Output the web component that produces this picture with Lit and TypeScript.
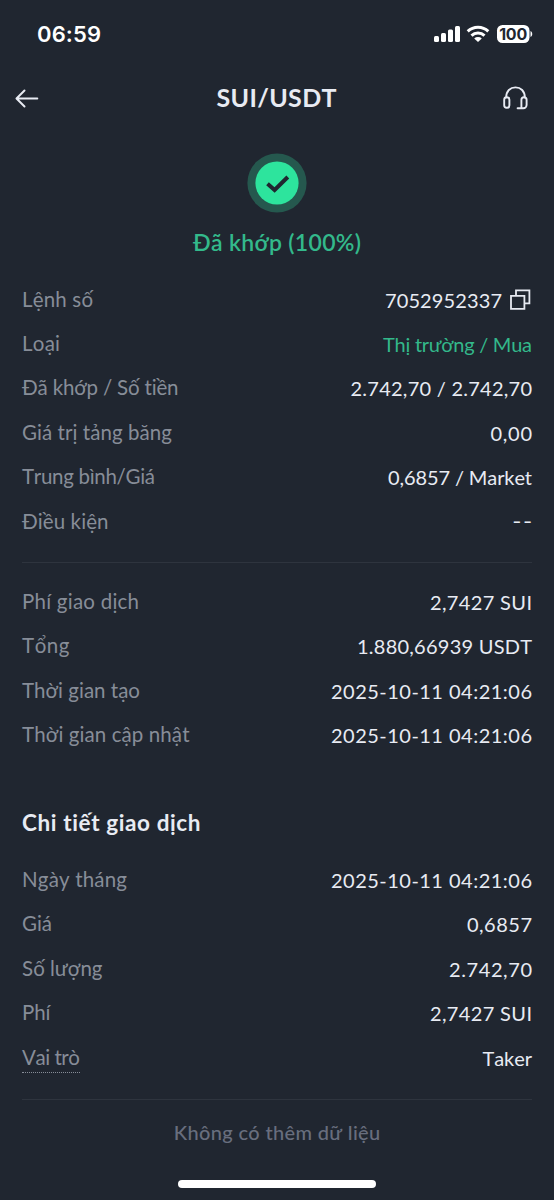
import { LitElement, html, css, svg } from "lit";
import { customElement, property } from "lit/decorators.js";

/* A single line of text tracked out (or in) to occupy a given measure. */
@customElement("fit-text")
class FitText extends LitElement {
  @property() text = "";
  @property({ type: Number }) measure = 0;

  static styles = css`
    :host { display: block; white-space: pre; }
    .line { display: inline-block; font-kerning: none; font-variant-ligatures: none; }
  `;

  async firstUpdated() {
    await document.fonts.ready;
    const line = this.renderRoot.querySelector(".line") as HTMLElement;
    const natural = line.getBoundingClientRect().width;
    const count = [...this.text].length;
    const spacing = (this.measure - natural) / Math.max(1, count - 1);
    line.style.letterSpacing = `${spacing}px`;
    line.style.marginRight = `${-spacing}px`;
  }

  render() {
    return html`<span class="line">${this.text}</span>`;
  }
}

type Row = {
  label: string;
  labelWidth: number;
  value: string;
  valueWidth: number;
  buy?: boolean;
  copy?: boolean;
  hint?: boolean;
  empty?: boolean;
};

const orderRows: Row[] = [
  { label: "Lệnh số", labelWidth: 71, value: "7052952337", valueWidth: 117, copy: true },
  { label: "Loại", labelWidth: 38, value: "Thị trường / Mua", valueWidth: 149, buy: true },
  { label: "Đã khớp / Số tiền", labelWidth: 156.5, value: "2.742,70 / 2.742,70", valueWidth: 181.5 },
  { label: "Giá trị tảng băng", labelWidth: 150, value: "0,00", valueWidth: 41.5 },
  { label: "Trung bình/Giá", labelWidth: 133, value: "0,6857 / Market", valueWidth: 144 },
  { label: "Điều kiện", labelWidth: 86.5, value: "--", valueWidth: 19.5, empty: true },
];

const feeRows: Row[] = [
  { label: "Phí giao dịch", labelWidth: 117, value: "2,7427 SUI", valueWidth: 102 },
  { label: "Tổng", labelWidth: 47.5, value: "1.880,66939 USDT", valueWidth: 175 },
  { label: "Thời gian tạo", labelWidth: 118, value: "2025-10-11 04:21:06", valueWidth: 201 },
  { label: "Thời gian cập nhật", labelWidth: 167.5, value: "2025-10-11 04:21:06", valueWidth: 201 },
];

const tradeRows: Row[] = [
  { label: "Ngày tháng", labelWidth: 105, value: "2025-10-11 04:21:06", valueWidth: 201 },
  { label: "Giá", labelWidth: 30, value: "0,6857", valueWidth: 65 },
  { label: "Số lượng", labelWidth: 80.5, value: "2.742,70", valueWidth: 83 },
  { label: "Phí", labelWidth: 28.5, value: "2,7427 SUI", valueWidth: 102 },
  { label: "Vai trò", labelWidth: 58, value: "Taker", valueWidth: 49.5, hint: true },
];

const copyIcon = svg`<svg width="22" height="22" viewBox="0 0 22 22" fill="none" stroke="#e6e9f1" stroke-width="1.8">
  <path d="M1 6.8H14.4V19.8H1Z"/><path d="M6 7V1.4H19.4V14.4H14.6"/></svg>`;

@customElement("app-root")
class AppRoot extends LitElement {
  static styles = css`
    :host {
      display: flex; flex-direction: column; box-sizing: border-box;
      width: 554px; height: 1200px; overflow: hidden;
      background: #202630; color: #e8ebf3;
      font-family: Lato, "Noto Sans", sans-serif; font-size: 20px; line-height: 24px;
    }
    svg { display: block; flex: none; }
    .status {
      height: 68px; box-sizing: border-box; padding: 0 21px 0 37px;
      display: flex; justify-content: space-between; align-items: center; color: #fff;
    }
    .clock { font: 600 22px/26px Inter, sans-serif; }
    .battery { font: 700 16px Inter, sans-serif; }
    .nav {
      height: 60px; box-sizing: border-box; padding: 0 22px 0 14px;
      display: grid; grid-template-columns: 30px 1fr 30px; align-items: center;
    }
    .title { justify-self: center; padding-left: 7px; margin-top: -2px; font-size: 25px; font-weight: 700; line-height: 30px; }
    .state { height: 148.5px; display: flex; flex-direction: column; align-items: center; padding-top: 25px; box-sizing: border-box; }
    .filled { margin-top: 15px; font-size: 23px; line-height: 28px; font-weight: 600; color: #33b98b; }
    .section { padding: 0 22px; }
    .row { height: 44.4px; display: flex; justify-content: space-between; align-items: center; }
    .label { color: #878d98; font-size: 20.5px; }
    .value { display: flex; align-items: center; gap: 8px; padding-top: 2px; }
    .buy { color: #33b98b; }
    .empty { font-family: Inter, sans-serif; font-size: 19px; }
    .hint { border-bottom: 1px dotted #878d98; height: 27px; margin-bottom: -4px; }
    .rule { height: 1px; margin: 19px 22px 16px; background: #2e343e; flex: none; }
    .heading { height: 100.5px; padding: 55px 22px 0; box-sizing: border-box; font-size: 22.5px; font-weight: 700; }
    .last { margin-top: 20.5px; }
    .end { align-self: center; color: #686e7e; font-weight: 500; margin-top: 4px; }
    .home { width: 198px; height: 8px; border-radius: 4px; background: #fff; align-self: center; margin: auto 0 12px; }
  `;

  row(r: Row) {
    return html`<div class="row">
      <fit-text class="label ${r.hint ? "hint" : ""}" .text=${r.label} .measure=${r.labelWidth}></fit-text>
      <div class="value ${r.buy ? "buy" : ""} ${r.empty ? "empty" : ""}">
        <fit-text .text=${r.value} .measure=${r.valueWidth}></fit-text>${r.copy ? copyIcon : ""}
      </div>
    </div>`;
  }

  render() {
    return html`
      <div class="status">
        <fit-text class="clock" .text=${"06:59"} .measure=${64}></fit-text>
        <svg width="100" height="20" viewBox="0 0 100 20" fill="#fff">
          <rect x="1" y="12" width="5" height="6" rx="1.5"/>
          <rect x="8" y="9" width="5" height="9" rx="1.5"/>
          <rect x="15" y="5.5" width="5" height="12.5" rx="1.5"/>
          <rect x="22" y="2" width="5" height="16" rx="1.5"/>
          <g fill="none" stroke="#fff" stroke-width="3">
            <path d="M34.7 7.4a15 15 0 0 1 20.6 0"/><path d="M38.5 11.6a9.4 9.4 0 0 1 13 0"/>
          </g>
          <path d="M41.2 14.4a5.6 5.6 0 0 1 7.6 0L45 18Z"/>
          <rect x="64" y="1" width="32.5" height="18" rx="5.5"/>
          <path d="M97.5 7c2.3.7 2.3 5.3 0 6Z"/>
          <text class="battery" x="80.2" y="15.8" text-anchor="middle" fill="#202630" textLength="28">100</text>
        </svg>
      </div>
      <div class="nav">
        <svg width="26" height="20" viewBox="0 0 26 20" fill="none" stroke="#e8ebf3" stroke-width="2" stroke-linecap="round" stroke-linejoin="round">
          <path d="M3 10.5H23.3M10.5 2.5L2.5 10.5L10.5 18.5"/>
        </svg>
        <fit-text class="title" .text=${"SUI/USDT"} .measure=${120}></fit-text>
        <svg width="28" height="26" viewBox="0 0 28 26" fill="none" stroke="#e8ebf3" stroke-width="1.9" stroke-linecap="round">
          <path d="M4.2 12.4C4.2 6 8.2 2.4 13.5 2.4S22.8 6 22.8 12.4"/>
          <rect x="2.2" y="12.2" width="5.2" height="10.6" rx="2.5"/>
          <path d="M24.6 19.6V14.8a2.6 2.6 0 0 0-5.2 0V20.6M24.6 19.5v.6a3.2 3.2 0 0 1-3.2 3.2H15.6M19.4 20.4v2.6"/>
        </svg>
      </div>
      <div class="state">
        <svg width="60" height="60" viewBox="0 0 60 60">
          <circle cx="30" cy="30" r="29.6" fill="#25584e"/>
          <circle cx="30" cy="30" r="21.6" fill="#2de49d"/>
          <path d="M20.5 30.7L27.6 37L40.8 24" fill="none" stroke="#202630" stroke-width="4"/>
        </svg>
        <fit-text class="filled" .text=${"Đã khớp (100%)"} .measure=${168}></fit-text>
      </div>
      <div class="section">${orderRows.map((r) => this.row(r))}</div>
      <div class="rule"></div>
      <div class="section">${feeRows.map((r) => this.row(r))}</div>
      <fit-text class="heading" .text=${"Chi tiết giao dịch"} .measure=${178.5}></fit-text>
      <div class="section">${tradeRows.map((r) => this.row(r))}</div>
      <div class="rule last"></div>
      <fit-text class="end" .text=${"Không có thêm dữ liệu"} .measure=${206.5}></fit-text>
      <div class="home"></div>
    `;
  }
}
